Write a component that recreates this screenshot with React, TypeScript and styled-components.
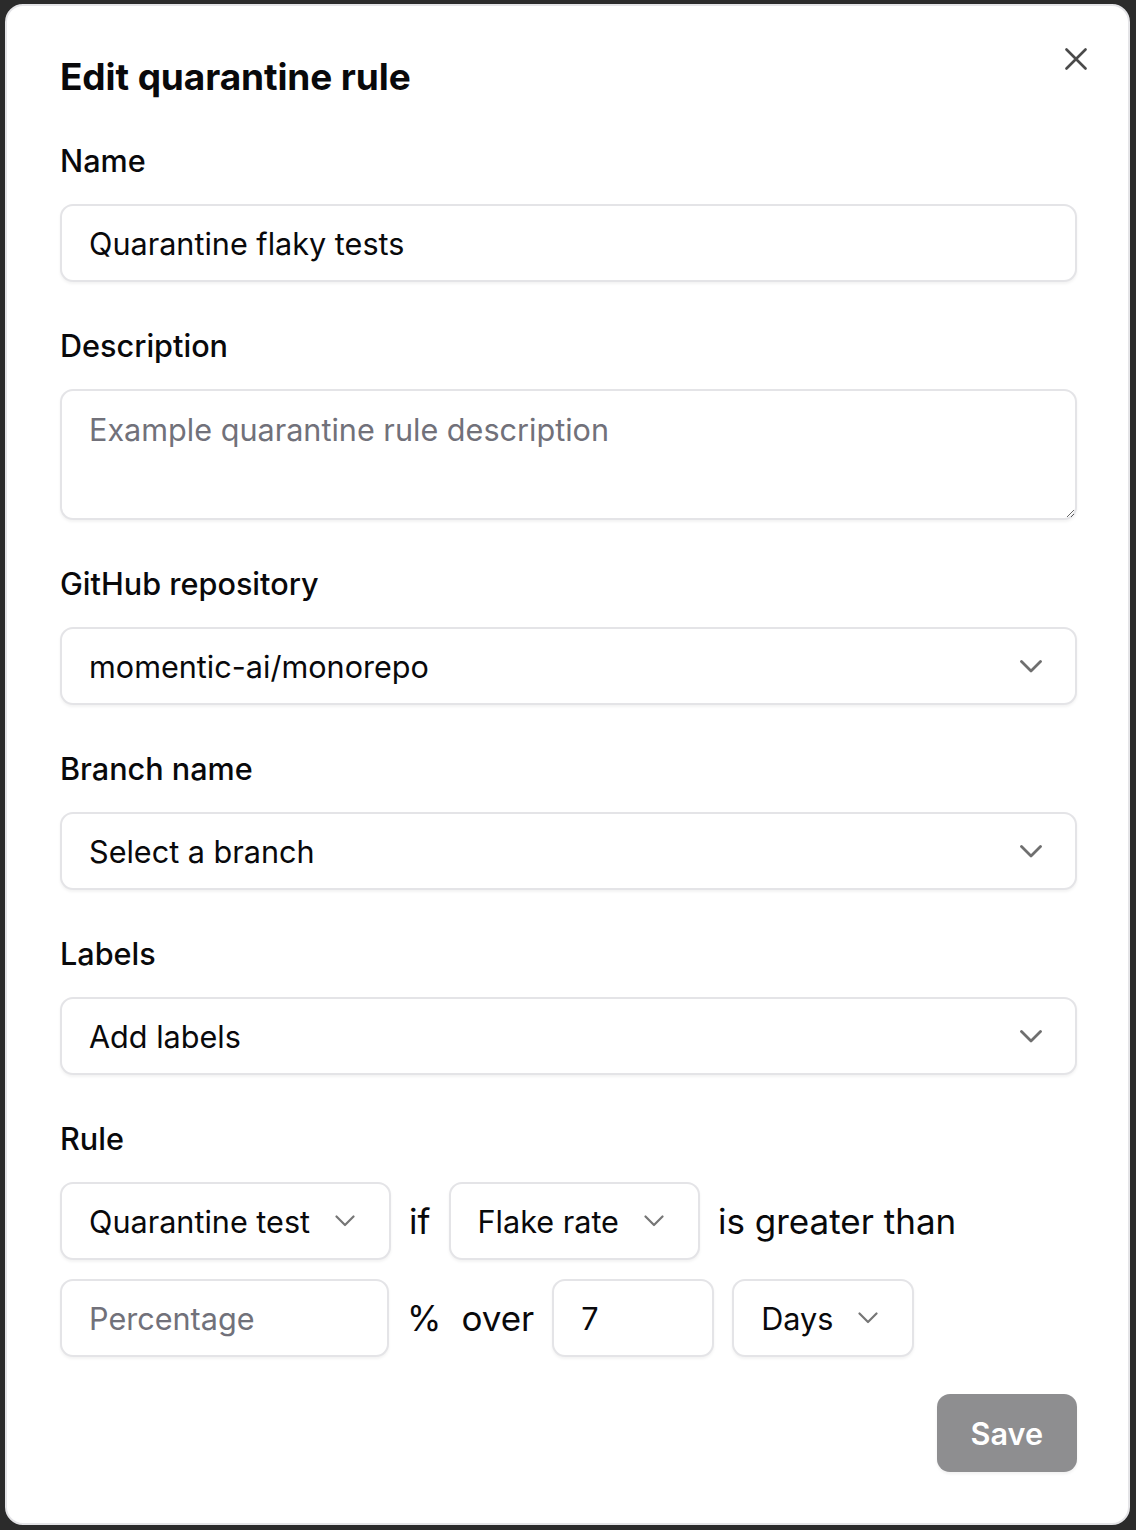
import React from 'react';
import styled, { createGlobalStyle } from 'styled-components';

const GlobalStyle = createGlobalStyle`
  html, body {
    margin: 0;
    padding: 0;
    background: #2b2b2b;
  }
  body {
    font-family: Inter, "Noto Sans", "Liberation Sans", sans-serif;
    color: #09090b;
    -webkit-font-smoothing: antialiased;
  }
  * {
    box-sizing: border-box;
  }
`;

const Page = styled.div`
  padding: 4px 6px 5px 5px;
`;

const Dialog = styled.div`
  position: relative;
  width: 1125px;
  height: 1521px;
  background: #fff;
  border: 2px solid #e4e4e7;
  border-radius: 18px;
  padding: 49px 51px 0 53px;
  display: flex;
  flex-direction: column;
`;

const Title = styled.h2`
  margin: 0 0 42px;
  font-size: 37px;
  line-height: 44px;
  font-weight: 700;
  letter-spacing: -0.1px;
`;

const CloseButton = styled.button`
  position: absolute;
  top: 31px;
  right: 30px;
  width: 44px;
  height: 44px;
  padding: 0;
  border: 0;
  background: transparent;
  display: flex;
  align-items: center;
  justify-content: center;
  color: #4a4a4a;
  cursor: pointer;
`;

const Form = styled.form`
  display: flex;
  flex-direction: column;
  gap: 44px;
`;

const Field = styled.div`
  display: flex;
  flex-direction: column;
  gap: 23px;
`;

const Label = styled.label`
  font-size: 30.6px;
  line-height: 40px;
  font-weight: 500;
`;

const Control = styled.div`
  height: 78px;
  border: 2px solid #e4e4e7;
  border-radius: 13px;
  background: #fff;
  box-shadow: 0 2px 3px rgba(0, 0, 0, 0.05);
  display: flex;
  align-items: center;
`;

const TextInput = styled.input<{ $width?: number }>`
  height: 78px;
  width: ${(p) => (p.$width ? `${p.$width}px` : '100%')};
  flex: none;
  border: 2px solid #e4e4e7;
  border-radius: 13px;
  background: #fff;
  box-shadow: 0 2px 3px rgba(0, 0, 0, 0.05);
  padding: 0 27px;
  font-family: inherit;
  font-size: 30.6px;
  color: #09090b;
  outline: none;

  &::placeholder {
    color: #71717a;
  }
`;

const TextArea = styled.textarea`
  height: 131px;
  width: 100%;
  border: 2px solid #e4e4e7;
  border-radius: 13px;
  background: #fff;
  box-shadow: 0 2px 3px rgba(0, 0, 0, 0.05);
  padding: 19px 27px;
  font-family: inherit;
  font-size: 30.6px;
  line-height: 40px;
  color: #09090b;
  outline: none;
  resize: vertical;
  display: block;

  &::placeholder {
    color: #71717a;
  }
`;

const SelectBox = styled(Control)`
  width: 100%;
  padding: 0 33px 0 27px;
  justify-content: space-between;
  font-size: 30.6px;
`;

const InlineSelect = styled(Control)`
  flex: none;
  padding: 0 34px 0 27px;
  gap: 25px;
  font-size: 30.6px;
`;

const RuleRows = styled.div`
  display: flex;
  flex-direction: column;
  gap: 19px;
`;

const RuleRow = styled.div`
  display: flex;
  align-items: center;
  gap: 18px;
`;

const Word = styled.span<{ $pad?: number }>`
  font-size: 35px;
  line-height: 40px;
  padding-right: ${(p) => p.$pad ?? 0}px;
`;

const Footer = styled.div`
  display: flex;
  justify-content: flex-end;
  margin-top: 37px;
`;

const SaveButton = styled.button`
  height: 78px;
  padding: 0 34px;
  border: 0;
  border-radius: 13px;
  background: #8e8e90;
  color: #fff;
  font-family: inherit;
  font-size: 30.6px;
  font-weight: 600;
  box-shadow: 0 2px 3px rgba(0, 0, 0, 0.06);
`;

const Chevron = ({ small }: { small?: boolean }) =>
  small ? (
    <svg width="20" height="12" viewBox="0 0 20 12" fill="none">
      <path
        d="M1.5 1.5 10 10 18.5 1.5"
        stroke="#767676"
        strokeWidth="2.2"
        strokeLinecap="round"
        strokeLinejoin="round"
      />
    </svg>
  ) : (
    <svg width="22" height="13" viewBox="0 0 22 13" fill="none">
      <path
        d="M1.5 1.5 11 11 20.5 1.5"
        stroke="#6f6f6f"
        strokeWidth="2.8"
        strokeLinecap="round"
        strokeLinejoin="round"
      />
    </svg>
  );

const CloseIcon = () => (
  <svg width="22" height="22" viewBox="0 0 22 22" fill="none">
    <path
      d="M1.5 1.5 20.5 20.5M20.5 1.5 1.5 20.5"
      stroke="currentColor"
      strokeWidth="2.6"
      strokeLinecap="round"
    />
  </svg>
);

const Select = ({ value }: { value: string }) => (
  <SelectBox>
    <span>{value}</span>
    <Chevron />
  </SelectBox>
);

const SmallSelect = ({ value }: { value: string }) => (
  <InlineSelect>
    <span>{value}</span>
    <Chevron small />
  </InlineSelect>
);

export default function App() {
  return (
    <>
      <GlobalStyle />
      <Page>
        <Dialog>
          <CloseButton aria-label="Close">
            <CloseIcon />
          </CloseButton>
          <Title>Edit quarantine rule</Title>
          <Form onSubmit={(e) => e.preventDefault()}>
            <Field>
              <Label>Name</Label>
              <TextInput defaultValue="Quarantine flaky tests" />
            </Field>
            <Field>
              <Label>Description</Label>
              <TextArea placeholder="Example quarantine rule description" />
            </Field>
            <Field>
              <Label>GitHub repository</Label>
              <Select value="momentic-ai/monorepo" />
            </Field>
            <Field>
              <Label>Branch name</Label>
              <Select value="Select a branch" />
            </Field>
            <Field>
              <Label>Labels</Label>
              <Select value="Add labels" />
            </Field>
            <Field>
              <Label>Rule</Label>
              <RuleRows>
                <RuleRow>
                  <SmallSelect value="Quarantine test" />
                  <Word>if</Word>
                  <SmallSelect value="Flake rate" />
                  <Word>is greater than</Word>
                </RuleRow>
                <RuleRow>
                  <TextInput $width={329} placeholder="Percentage" />
                  <Word $pad={2}>%</Word>
                  <Word>over</Word>
                  <TextInput $width={162} defaultValue="7" />
                  <SmallSelect value="Days" />
                </RuleRow>
              </RuleRows>
            </Field>
          </Form>
          <Footer>
            <SaveButton disabled>Save</SaveButton>
          </Footer>
        </Dialog>
      </Page>
    </>
  );
}
